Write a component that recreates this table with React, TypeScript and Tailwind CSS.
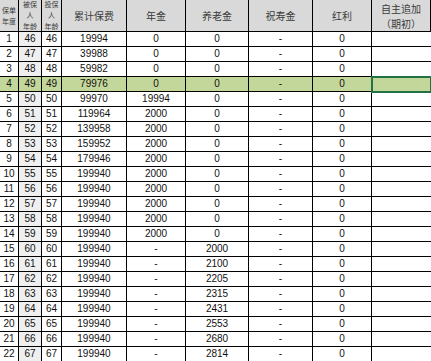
const rows: (string | number)[][] = [
  [1, 46, 46, 19994, 0, 0, "-", 0],
  [2, 47, 47, 39988, 0, 0, "-", 0],
  [3, 48, 48, 59982, 0, 0, "-", 0],
  [4, 49, 49, 79976, 0, 0, "-", 0],
  [5, 50, 50, 99970, 19994, 0, "-", 0],
  [6, 51, 51, 119964, 2000, 0, "-", 0],
  [7, 52, 52, 139958, 2000, 0, "-", 0],
  [8, 53, 53, 159952, 2000, 0, "-", 0],
  [9, 54, 54, 179946, 2000, 0, "-", 0],
  [10, 55, 55, 199940, 2000, 0, "-", 0],
  [11, 56, 56, 199940, 2000, 0, "-", 0],
  [12, 57, 57, 199940, 2000, 0, "-", 0],
  [13, 58, 58, 199940, 2000, 0, "-", 0],
  [14, 59, 59, 199940, 2000, 0, "-", 0],
  [15, 60, 60, 199940, "-", 2000, "-", 0],
  [16, 61, 61, 199940, "-", 2100, "-", 0],
  [17, 62, 62, 199940, "-", 2205, "-", 0],
  [18, 63, 63, 199940, "-", 2315, "-", 0],
  [19, 64, 64, 199940, "-", 2431, "-", 0],
  [20, 65, 65, 199940, "-", 2553, "-", 0],
  [21, 66, 66, 199940, "-", 2680, "-", 0],
  [22, 67, 67, 199940, "-", 2814, "-", 0],
]

const grid = "grid grid-cols-[19px_23px_20px_65px_59px_63px_64px_59px_59px]"
const cjk = { fontFamily: '"Noto Sans CJK SC", "Liberation Sans", sans-serif' }

function HeadCell({ lines, small }: { lines: string[]; small?: boolean }) {
  return (
    <div
      className={`flex flex-col items-center justify-center overflow-hidden border-r border-b border-black bg-[#d9d9d9] text-[#3a3a3a] ${
        small ? "text-[7px] leading-[11px]" : "text-[10px] leading-[15px]"
      }`}
      style={cjk}
    >
      {lines.map((l, i) => (
        <span key={i} className="whitespace-nowrap">
          {l}
        </span>
      ))}
    </div>
  )
}

export default function App() {
  return (
    <div className="w-[431px] h-[361px] overflow-hidden bg-white font-['Liberation_Sans',sans-serif]">
      <div className={`${grid} h-[32px]`}>
        <HeadCell lines={["保单", "年度"]} small />
        <HeadCell lines={["被保", "人", "年龄"]} small />
        <HeadCell lines={["投保", "人", "年龄"]} small />
        <HeadCell lines={["累计保费"]} />
        <HeadCell lines={["年金"]} />
        <HeadCell lines={["养老金"]} />
        <HeadCell lines={["祝寿金"]} />
        <HeadCell lines={["红利"]} />
        <HeadCell lines={["自主追加", "（期初）"]} />
      </div>
      {rows.map((r, ri) => {
        const hl = ri === 3
        return (
          <div key={ri} className={`${grid} h-[15px] text-[10px] leading-[14px] text-[#111]`}>
            {r.map((v, ci) => (
              <div
                key={ci}
                className={`border-r border-b border-black text-center ${
                  hl ? "bg-[#c4d79b]" : ci === 1 ? "bg-[#efefef]" : "bg-white"
                }`}
              >
                {v}
              </div>
            ))}
            <div
              className={`border-b border-black ${
                hl ? "relative z-10 bg-[#c4d79b] outline-2 outline-[#217346] -outline-offset-1" : "bg-white"
              }`}
            />
          </div>
        )
      })}
    </div>
  )
}
